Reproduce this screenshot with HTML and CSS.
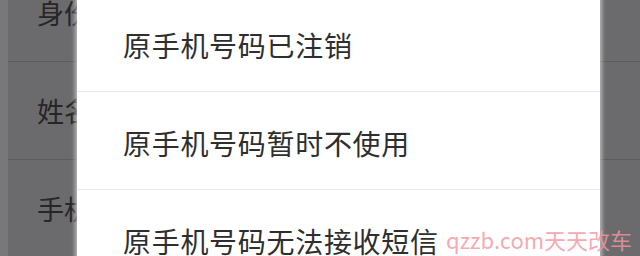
FILE: index.html
```html
<!DOCTYPE html>
<html lang="zh-CN">
<head>
    <meta charset="UTF-8">
    <meta name="viewport" content="width=device-width, initial-scale=1.0">
    <title>更换手机号</title>
    <link rel="stylesheet" href="styles.css">
</head>
<body>

<div id="page">
    <ul class="form-list">
        <li class="form-row">身份证号</li>
        <li class="form-row">姓名</li>
        <li class="form-row">手机号</li>
    </ul>
</div>

<div id="mask">
    <ul class="reason-list">
        <li class="reason">原手机号码已注销</li>
        <li class="reason">原手机号码暂时不使用</li>
        <li class="reason">原手机号码无法接收短信</li>
    </ul>
</div>

<div class="watermark">qzzb.com天天改车</div>

</body>
</html>
```

FILE: styles.css
```css
* {
  box-sizing: border-box;
  margin: 0;
  padding: 0;
}

html, body {
  width: 100%;
  height: 100%;
  overflow: hidden;
  font-family: "Noto Sans CJK SC", "Noto Sans", sans-serif;
}

body {
  background: #78777a;
}

#page {
  padding-left: 8px;
  height: 100%;
}

.form-list {
  list-style-type: none;
  margin-top: -36px;
  background: #6b6a6c;
}

.form-row {
  height: 98px;
  padding-left: 29px;
  display: flex;
  align-items: center;
  font-size: 27px;
  color: #262527;
  border-bottom: 1px solid #5c5b5d;
  white-space: nowrap;
  overflow: hidden;
}

#mask {
  position: absolute;
  left: 77px;
  top: -6px;
  width: 523px;
  background: #ffffff;
  box-shadow: 0 0 4px 2px rgba(220, 220, 222, 0.7);
}

.reason-list {
  list-style-type: none;
}

.reason {
  height: 98px;
  padding-left: 46px;
  padding-top: 4px;
  display: flex;
  align-items: center;
  font-size: 28px;
  letter-spacing: 0.7px;
  color: #2e2e2e;
  border-bottom: 1px solid #e8e8e8;
}

.watermark {
  position: absolute;
  left: 446px;
  top: 223px;
  font-size: 22px;
  color: rgba(242, 150, 162, 0.82);
  white-space: nowrap;
}
```
